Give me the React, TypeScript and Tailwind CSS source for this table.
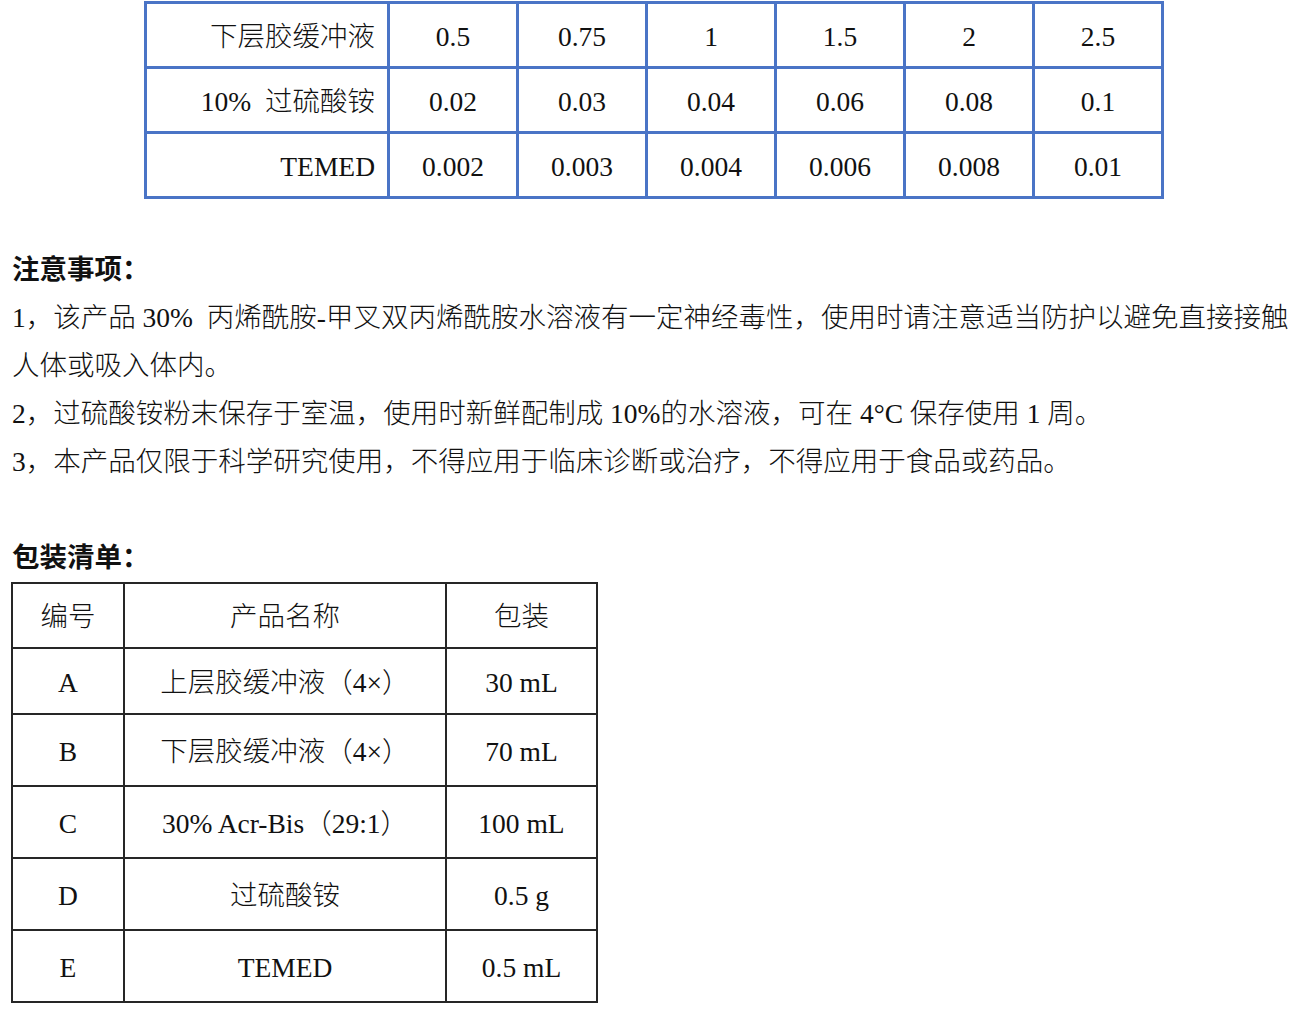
const font = { fontFamily: "'Liberation Serif', 'Noto Sans CJK SC', serif" };

const gelRows = [
  { label: "下层胶缓冲液", values: ["0.5", "0.75", "1", "1.5", "2", "2.5"] },
  { label: "10%  过硫酸铵", values: ["0.02", "0.03", "0.04", "0.06", "0.08", "0.1"] },
  { label: "TEMED", values: ["0.002", "0.003", "0.004", "0.006", "0.008", "0.01"] },
];

const notes = [
  "1，该产品 30%  丙烯酰胺-甲叉双丙烯酰胺水溶液有一定神经毒性，使用时请注意适当防护以避免直接接触",
  "人体或吸入体内。",
  "2，过硫酸铵粉末保存于室温，使用时新鲜配制成 10%的水溶液，可在 4°C 保存使用 1 周。",
  "3，本产品仅限于科学研究使用，不得应用于临床诊断或治疗，不得应用于食品或药品。",
];

const packing = [
  { id: "编号", name: "产品名称", pack: "包装", h: "h-[65px]" },
  { id: "A", name: "上层胶缓冲液（4×）", pack: "30 mL", h: "h-[66px]" },
  { id: "B", name: "下层胶缓冲液（4×）", pack: "70 mL", h: "h-[72px]" },
  { id: "C", name: "30% Acr-Bis（29:1）", pack: "100 mL", h: "h-[72px]" },
  { id: "D", name: "过硫酸铵", pack: "0.5 g", h: "h-[72px]" },
  { id: "E", name: "TEMED", pack: "0.5 mL", h: "h-[72px]" },
];

function GelTable() {
  return (
    <div className="ml-[144px] mt-px w-[1020px] border-l-[3px] border-t-[3px] border-[#4a74c6]">
      {gelRows.map((row) => (
        <div key={row.label} className="grid h-[65px] grid-cols-[243px_129px_129px_129px_129px_129px_129px]">
          <div className="flex items-center justify-end whitespace-pre border-b-[3px] border-r-[3px] border-[#4a74c6] pr-[12px] pt-[3px]">
            {row.label}
          </div>
          {row.values.map((v, i) => (
            <div key={i} className="flex items-center justify-center border-b-[3px] border-r-[3px] border-[#4a74c6] pt-[3px]">
              {v}
            </div>
          ))}
        </div>
      ))}
    </div>
  );
}

function PackingTable() {
  return (
    <div className="ml-[11px] w-[587px] border-l-2 border-t-2 border-[#262626]">
      {packing.map((row) => (
        <div key={row.id} className={`grid grid-cols-[112px_322px_151px] ${row.h}`}>
          <div className="flex items-center justify-center border-b-2 border-r-2 border-[#262626] pt-[3px]">{row.id}</div>
          <div className="flex items-center justify-center border-b-2 border-r-2 border-[#262626] pt-[3px]">{row.name}</div>
          <div className="flex items-center justify-center border-b-2 border-r-2 border-[#262626] pt-[3px]">{row.pack}</div>
        </div>
      ))}
    </div>
  );
}

export default function App() {
  return (
    <div className="min-h-screen w-[1311px] bg-white text-[27.5px] font-light text-[#111]" style={font}>
      <GelTable />

      <div className="px-[12px] leading-[48px]">
        <div className="h-[47px]" />
        <p className="font-bold">注意事项：</p>
        {notes.map((n, i) => (
          <p key={i} className="whitespace-pre">{n}</p>
        ))}
        <div className="h-[48px]" />
        <p className="font-bold">包装清单：</p>
      </div>

      <PackingTable />
    </div>
  );
}
